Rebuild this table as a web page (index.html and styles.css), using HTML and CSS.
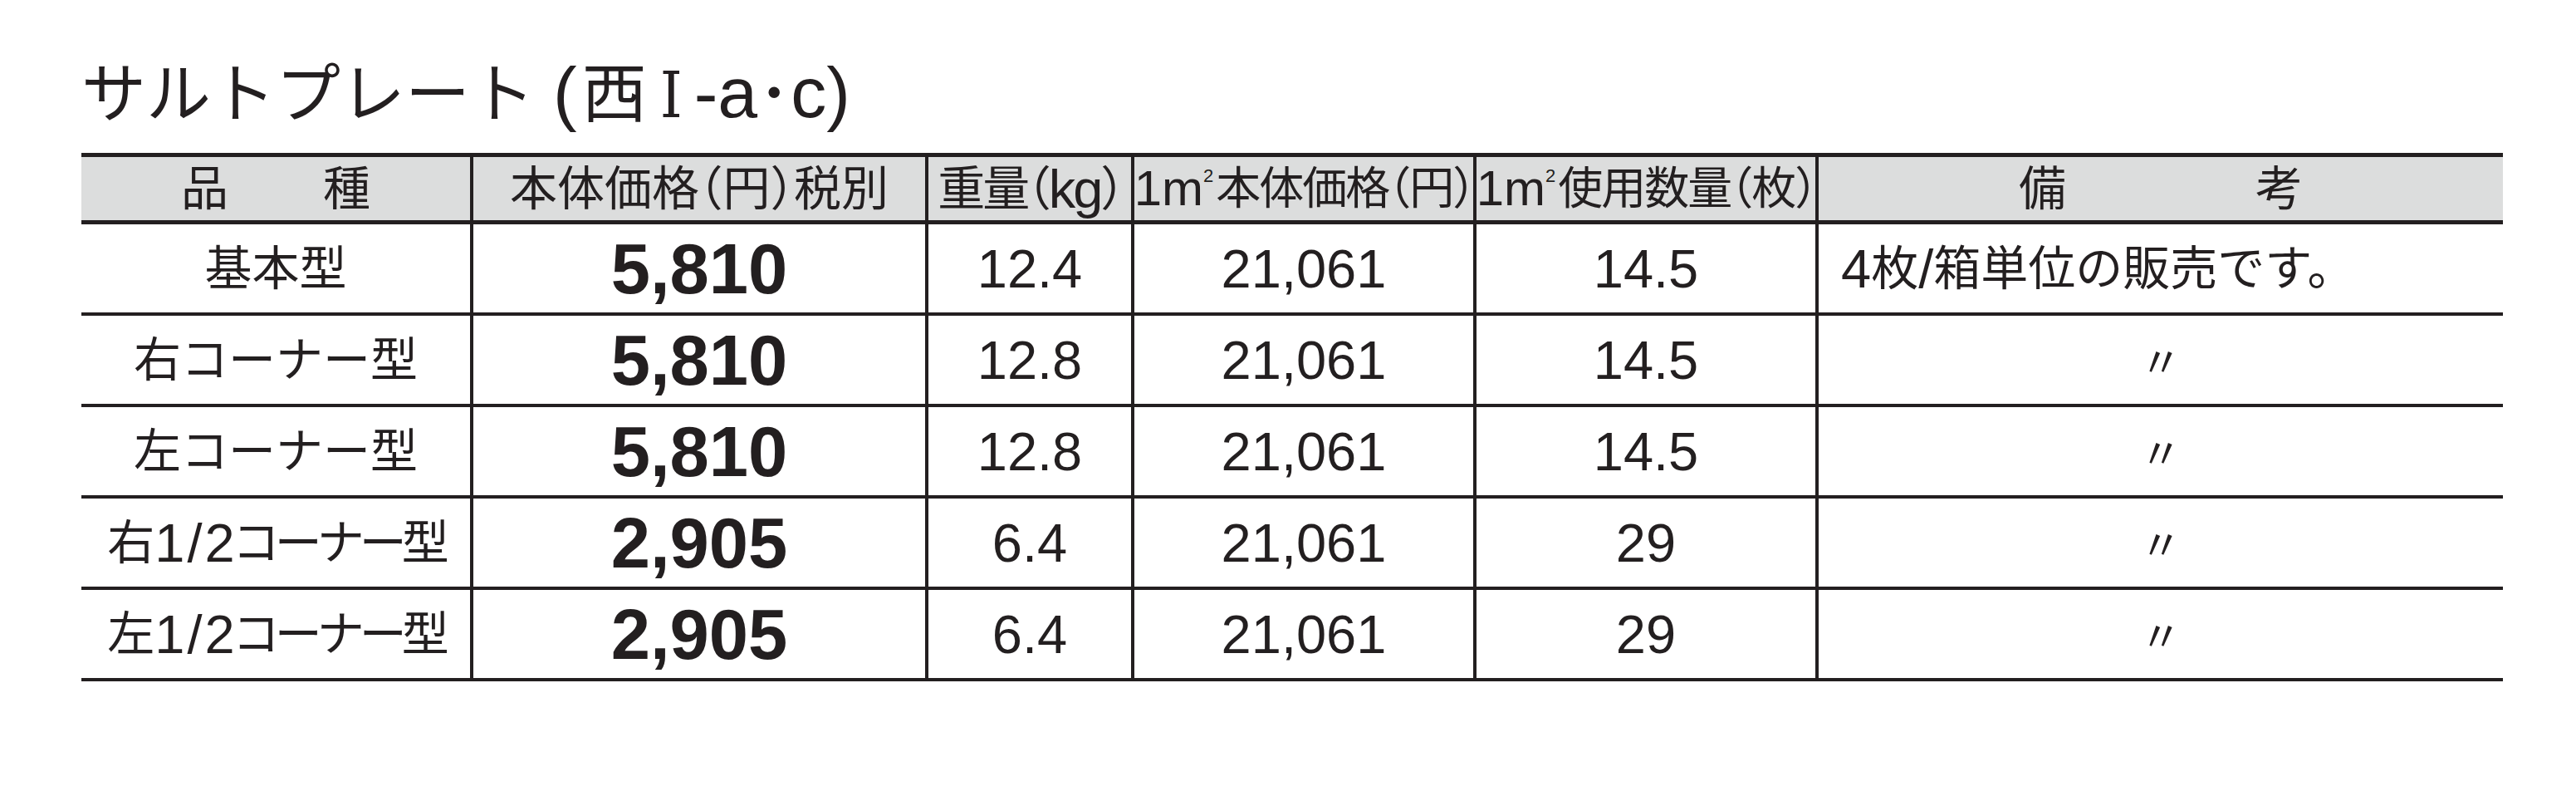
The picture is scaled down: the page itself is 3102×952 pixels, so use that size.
FILE: index.html
```html
<!DOCTYPE html>
<html lang="ja">
<head>
<meta charset="utf-8">
<title>サルトプレート（西Ⅰ-a･c）</title>
<link rel="stylesheet" href="styles.css">
</head>
<body>
<div class="page">
  <h1 class="title">サルトプレート<span class="t-paren">(</span><span class="t-west">西</span><span class="t-roman">Ⅰ</span><span class="t-lat">-a</span><span class="t-dot">･</span><span class="t-lat">c)</span></h1>

  <div class="table">
    <div class="row head">
      <div class="cell">品　　種</div>
      <div class="cell">本体価格（円）税別</div>
      <div class="cell h-tight">重量（<span class="lat">kg</span>）</div>
      <div class="cell h-sq">
        <span class="lat sqm">1m</span><span class="sup">2</span>本体価格（円）
      </div>
      <div class="cell h-sq">
        <span class="lat sqm">1m</span><span class="sup">2</span>使用数量（枚）
      </div>
      <div class="cell">備　　　　考</div>
    </div>

    <div class="row">
      <div class="cell">基本型</div>
      <div class="cell price">5,810</div>
      <div class="cell num">12.4</div>
      <div class="cell num">21,061</div>
      <div class="cell num">14.5</div>
      <div class="cell note"><span class="lat">4</span>枚<span class="lat">/</span>箱単位の販売です。</div>
    </div>

    <div class="row">
      <div class="cell">右コーナー型</div>
      <div class="cell price">5,810</div>
      <div class="cell num">12.8</div>
      <div class="cell num">21,061</div>
      <div class="cell num">14.5</div>
      <div class="cell"><span class="ditto">〃</span></div>
    </div>

    <div class="row">
      <div class="cell">左コーナー型</div>
      <div class="cell price">5,810</div>
      <div class="cell num">12.8</div>
      <div class="cell num">21,061</div>
      <div class="cell num">14.5</div>
      <div class="cell"><span class="ditto">〃</span></div>
    </div>

    <div class="row">
      <div class="cell">右<span class="lat half">1/2</span><span class="squeeze">コーナー型</span></div>
      <div class="cell price">2,905</div>
      <div class="cell num">6.4</div>
      <div class="cell num">21,061</div>
      <div class="cell num">29</div>
      <div class="cell"><span class="ditto">〃</span></div>
    </div>

    <div class="row">
      <div class="cell">左<span class="lat half">1/2</span><span class="squeeze">コーナー型</span></div>
      <div class="cell price">2,905</div>
      <div class="cell num">6.4</div>
      <div class="cell num">21,061</div>
      <div class="cell num">29</div>
      <div class="cell"><span class="ditto">〃</span></div>
    </div>
  </div>
</div>
</body>
</html>
```

FILE: styles.css
```css
html, body {
  margin: 0;
  padding: 0;
  background: #ffffff;
}

body {
  font-family: "Liberation Sans", "Noto Sans CJK JP", sans-serif;
  color: #231f20;
}

.page {
  padding: 0 0 0 98px;
}

/* ---------- title ---------- */
.title {
  margin: 66px 0 0 0;
  height: 80px;
  font-family: "Noto Sans CJK JP", sans-serif;
  font-weight: 400;
  font-size: 78px;
  line-height: 80px;
  white-space: nowrap;
}

.t-paren {
  font-family: "Liberation Sans", sans-serif;
  font-size: 86px;
  margin-left: 22px;
}

.t-west {
  margin-left: 6px;
}

.t-roman {
  font-family: "DejaVu Serif Condensed", "DejaVu Serif", "Liberation Serif", serif;
  font-size: 76px;
  margin-left: 16px;
  margin-right: 14px;
}

.t-lat {
  font-family: "Liberation Sans", sans-serif;
  font-size: 86px;
}

.t-dot {
  font-size: 80px;
}

/* ---------- table ---------- */
.table {
  margin-top: 38px;
  width: 2916px;
}

.row {
  display: grid;
  grid-template-columns: 468px 548px 248px 412px 412px 828px;
  height: 110px;
  box-sizing: border-box;
  border-bottom: 4px solid #231f20;
}

.row.head {
  height: 86px;
  border-top: 5px solid #231f20;
  border-bottom: 5px solid #231f20;
  background: #dcdddd;
}

.cell {
  display: flex;
  align-items: center;
  justify-content: center;
  font-size: 57px;
  line-height: 1;
  white-space: nowrap;
  border-left: 4px solid #231f20;
}

.cell:first-child {
  border-left: none;
}

.head .cell {
  font-feature-settings: "halt";
}

.lat {
  font-family: "Liberation Sans", sans-serif;
  font-size: 65px;
}

.h-tight {
  letter-spacing: -3px;
}

.h-sq {
  font-size: 54px;
  letter-spacing: -2px;
}

.h-sq .sqm {
  font-size: 60px;
  letter-spacing: 0;
}

.sup {
  font-family: "Liberation Sans", sans-serif;
  font-size: 22px;
  align-self: flex-start;
  margin-top: 12px;
  margin-right: 3px;
  letter-spacing: 0;
}

.price {
  font-family: "Liberation Sans", sans-serif;
  font-weight: 700;
  font-size: 85px;
}

.num {
  font-family: "Liberation Sans", sans-serif;
  font-size: 65px;
}

.note {
  justify-content: flex-start;
  padding-left: 27px;
}

.half {
  letter-spacing: 3px;
  margin-right: -6px;
}

.squeeze {
  letter-spacing: -6px;
}

.ditto {
  font-size: 50px;
  display: inline-block;
  transform: translateY(4px);
}
```
